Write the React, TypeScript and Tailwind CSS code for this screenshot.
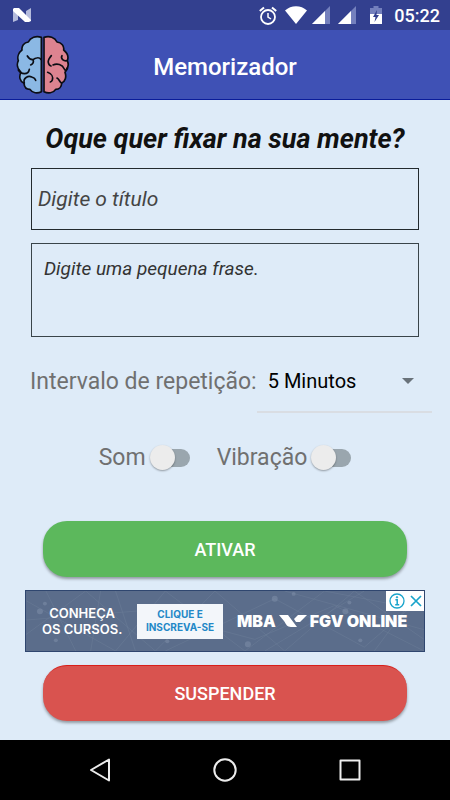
import { useState } from 'react';
import type { ReactElement } from 'react';

const INTERVALS = ['5 Minutos', '10 Minutos', '15 Minutos', '30 Minutos', '1 Hora'];

function SignalIcon(): ReactElement {
  return (
    <svg viewBox="0 0 18 18" className="size-[18px]" aria-hidden="true">
      <path d="M18 0V18H0Z" fill="#7480bd" />
      <path d="M13 5V18H0Z" fill="#fff" />
    </svg>
  );
}

function StatusBar(): ReactElement {
  return (
    <div className="flex h-[30px] items-center justify-between bg-[#33408f] pl-[13px] pr-[10px]">
      <svg viewBox="0 0 18 15" className="h-[15px] w-[18px]" aria-hidden="true">
        <path d="M0 1 5 4V12L0 14ZM18 0V13L13 11V3Z" fill="#b4bbdc" />
        <path d="M1 0H6L18 12V13L16 14H12L0 3V1Z" fill="#fff" />
      </svg>
      <div className="flex items-center">
        <svg viewBox="0 0 18 19" className="mr-2 h-[19px] w-[18px]" fill="none" stroke="#fff" aria-hidden="true">
          <circle cx="9" cy="11" r="7" strokeWidth="1.8" />
          <path d="M9 7V11L12 13" strokeWidth="1.5" />
          <path d="M.8 5 5 1.4M17.2 5 13 1.4" strokeWidth="2" />
        </svg>
        <svg viewBox="0 0 22 18" className="mr-[5px] h-[18px] w-[22px]" aria-hidden="true">
          <path d="M11 18 0 4.5C6-1.3 16-1.3 22 4.5Z" fill="#fff" />
        </svg>
        <SignalIcon />
        <span className="w-2" />
        <SignalIcon />
        <svg viewBox="0 0 12 18" className="ml-[14px] mr-3 h-[18px] w-3" aria-hidden="true">
          <path d="M3.5 0H8.5V2H12V8H0V2H3.5Z" fill="#7480bd" />
          <path d="M0 8H12V18H0Z" fill="#fff" />
          <path d="M7 4 3 11H5.5L4.5 16 9 9H6.5Z" fill="#33408f" />
        </svg>
        <span className="pt-px text-lg font-medium text-white">05:22</span>
      </div>
    </div>
  );
}

function BrainLogo(): ReactElement {
  return (
    <svg viewBox="51 105 162 180" className="h-[60px] w-[54px]" strokeLinecap="round" strokeLinejoin="round" aria-hidden="true">
      <g stroke="#0b0d14" strokeWidth="5">
        <path
          d="M127 112C111 107 94 112 88 126C75 128 67 138 69 150C59 158 54 171 58 182C52 194 56 208 66 217C59 229 62 244 75 250C76 263 84 268 93 268C100 280 116 281 127 275Z"
          fill="#8bb8e4"
        />
        <path
          d="M135 112C151 107 168 112 174 126C188 128 196 138 194 150C205 159 209 172 205 182C210 194 207 207 198 217C203 230 199 244 188 249C188 261 180 268 170 268C163 280 147 281 135 275Z"
          fill="#dd8390"
        />
        <g fill="none">
          <path d="M126 178C120 171 109 174 102 179C94 180 88 173 85 168M102 179C105 186 101 192 95 195" />
          <path d="M58 210C67 225 88 225 91 208" />
          <path d="M76 249C71 234 88 226 98 231C105 233 109 237 110 241" />
          <path d="M157 167C151 174 146 181 148 188C149 193 151 197 156 198" />
          <path d="M162 195C174 189 190 193 196 207C199 214 203 210 204 204" />
          <path d="M204 182C194 184 184 176 189 167" />
          <path d="M146 217C158 221 163 231 160 240C159 243 157 245 154 246" />
          <path d="M174 234C182 238 181 247 188 249" />
        </g>
      </g>
      <path d="M131 114V274" stroke="#2b3570" strokeWidth="3" />
    </svg>
  );
}

function Toggle({ label }: { label: string }): ReactElement {
  return (
    <label className="flex items-center gap-2 text-[23px] leading-8 text-[#707070]">
      {label}
      <input
        type="checkbox"
        className="relative h-[18px] w-9 appearance-none rounded-full bg-[#9aa6ae] before:absolute before:-left-1 before:-top-1 before:size-[25px] before:rounded-full before:bg-[#ececec] before:shadow-[0_1px_2px_rgba(0,0,0,0.35)] checked:bg-[#9fa8da] checked:before:left-4 checked:before:bg-[#3f51b5]"
      />
    </label>
  );
}

function AdBanner(): ReactElement {
  return (
    <div className="relative mx-[25px] mt-[13px] flex h-[62px] items-center overflow-hidden border border-[#2f466f] bg-[#5b6d8b] pl-4 font-['Inter','Open_Sans',sans-serif]">
      <svg viewBox="0 0 400 62" preserveAspectRatio="none" className="absolute inset-0 size-full" aria-hidden="true">
        <path
          d="M0 45 60 0 130 62 190 0 260 62 330 0 400 50M0 10 90 62 140 0 220 62 300 0 400 20M20 0 50 62M75 0 65 62M90 0 110 62M0 30 120 20 230 50 310 15 400 62M240 62 340 0M260 0 400 40M350 62 395 0M140 62 250 8 340 58 400 5"
          fill="none"
          stroke="#71819c"
          strokeWidth="1"
          opacity=".4"
        />
        <g fill="#8292ac" opacity=".5">
          <circle cx="14" cy="21" r="3" />
          <circle cx="19" cy="13" r="2" />
          <circle cx="30" cy="51" r="2" />
          <circle cx="250" cy="8" r="3" />
          <circle cx="269" cy="3" r="2" />
          <circle cx="321" cy="21" r="3" />
          <circle cx="223" cy="55" r="3" />
          <circle cx="336" cy="51" r="2" />
          <circle cx="142" cy="52" r="2" />
          <circle cx="325" cy="12" r="2" />
        </g>
      </svg>
      <p className="relative w-20 shrink-0 text-center text-[13px] leading-4 font-semibold whitespace-nowrap text-white">
        CONHEÇA
        <br />
        OS CURSOS.
      </p>
      <a
        href="#"
        className="relative ml-[15px] flex h-[35px] w-[86px] shrink-0 items-center justify-center bg-[#f3f6fa] text-center text-[10px] leading-[13px] font-bold text-[#2388c7]"
      >
        CLIQUE E
        <br />
        INSCREVA-SE
      </a>
      <div className="relative ml-[14px] flex items-center text-base font-black whitespace-nowrap text-white">
        <span>MBA</span>
        <svg viewBox="0 0 28 12" className="mx-[3px] h-3 w-7 shrink-0" fill="#fff" aria-hidden="true">
          <path d="M0 0H9L18 12H12C8 12 7 9 5 6ZM19 0H28L21 7H17L15 4Z" />
        </svg>
        <span>FGV ONLINE</span>
      </div>
      <div className="absolute top-0 right-0 flex h-5 w-[38px] items-center justify-around bg-white">
        <button type="button" aria-label="Informações do anúncio">
          <svg viewBox="0 0 16 16" className="size-4" fill="none" stroke="#18a4cb" aria-hidden="true">
            <circle cx="8" cy="8" r="7" strokeWidth="1.3" />
            <path d="M6.4 6.8H8.2V11.6M6.2 11.7H10.2" strokeWidth="1.5" />
            <circle cx="8" cy="4.3" r=".7" fill="#18a4cb" />
          </svg>
        </button>
        <button type="button" aria-label="Fechar anúncio">
          <svg viewBox="0 0 12 12" className="size-3" stroke="#18a4cb" strokeWidth="1.7" aria-hidden="true">
            <path d="M1 1 11 11M11 1 1 11" />
          </svg>
        </button>
      </div>
    </div>
  );
}

function NavBar(): ReactElement {
  return (
    <nav className="grid h-[60px] grid-cols-3 bg-black px-9">
      <button type="button" aria-label="Voltar" className="flex items-center justify-center">
        <svg viewBox="0 0 24 24" className="size-6" fill="none" stroke="#ececec" strokeWidth="2" strokeLinejoin="round" aria-hidden="true">
          <path d="M22 1.5V22.5L4 12Z" />
        </svg>
      </button>
      <button type="button" aria-label="Início" className="flex items-center justify-center">
        <svg viewBox="0 0 24 24" className="size-6" fill="none" stroke="#ececec" strokeWidth="2" aria-hidden="true">
          <circle cx="12" cy="12" r="10.7" />
        </svg>
      </button>
      <button type="button" aria-label="Recentes" className="flex items-center justify-center">
        <svg viewBox="0 0 24 24" className="size-6" fill="none" stroke="#ececec" strokeWidth="2" strokeLinejoin="round" aria-hidden="true">
          <path d="M1.5 2.5H20.5V21.5H1.5Z" />
        </svg>
      </button>
    </nav>
  );
}

export default function App(): ReactElement {
  const [interval, setInterval] = useState(INTERVALS[0]);

  return (
    <div className="flex min-h-screen flex-col bg-[#deebf8] font-['Roboto',sans-serif]">
      <StatusBar />
      <header className="grid h-[70px] grid-cols-[54px_1fr_54px] items-center border-b border-[#0a1c9a] bg-[#3f51b5] px-4">
        <BrainLogo />
        <h1 className="pt-1 text-center text-2xl font-medium text-white">Memorizador</h1>
      </header>

      <main className="flex-1">
        <h2 className="mt-[21px] text-center text-[27px] leading-9 font-bold text-[#111] italic">
          Oque quer fixar na sua mente?
        </h2>
        <div className="mx-[31px] mt-[11px] flex flex-col gap-[13px]">
          <input
            type="text"
            aria-label="Título"
            placeholder="Digite o título"
            className="h-[62px] w-full border border-[#222a2e] px-[6px] text-[21px] italic placeholder:text-[#444]"
          />
          <textarea
            aria-label="Frase"
            placeholder="Digite uma pequena frase."
            className="block h-[94px] w-full resize-none border border-[#39444a] px-3 py-[13px] text-[19px] leading-6 italic placeholder:text-[#333]"
          />
        </div>

        <div className="mt-3 mr-[18px] ml-[30px] flex h-16 items-center">
          <label htmlFor="interval" className="shrink-0 pt-px text-[23px] leading-8 text-[#707070]">
            Intervalo de repetição:
          </label>
          <div className="relative h-full flex-1 border-b-2 border-[#d9dde3]">
            <select
              id="interval"
              value={interval}
              onChange={(e) => setInterval(e.target.value)}
              className="size-full appearance-none pt-px pl-[11px] text-xl text-black"
            >
              {INTERVALS.map((item) => (
                <option key={item}>{item}</option>
              ))}
            </select>
            <svg viewBox="0 0 12 6" className="pointer-events-none absolute top-[29px] right-[18px] h-[6px] w-3" fill="#69727a" aria-hidden="true">
              <path d="M0 0H12L6 6Z" />
            </svg>
          </div>
        </div>

        <div className="mt-[29px] flex justify-center gap-[27px]">
          <Toggle label="Som" />
          <Toggle label="Vibração" />
        </div>

        <div className="mx-[43px] mt-[47px]">
          <button
            type="button"
            className="h-14 w-full rounded-3xl bg-[#5cb85c] pt-px text-lg font-medium text-white shadow-[0_2px_3px_rgba(0,0,0,0.35)]"
          >
            ATIVAR
          </button>
        </div>
        <AdBanner />
        <div className="mx-[43px] mt-[13px]">
          <button
            type="button"
            className="h-14 w-full rounded-3xl border-t border-[#d81f1a] bg-[#d9534f] text-lg font-medium text-white shadow-[0_2px_3px_rgba(0,0,0,0.35)]"
          >
            SUSPENDER
          </button>
        </div>
      </main>

      <NavBar />
    </div>
  );
}
